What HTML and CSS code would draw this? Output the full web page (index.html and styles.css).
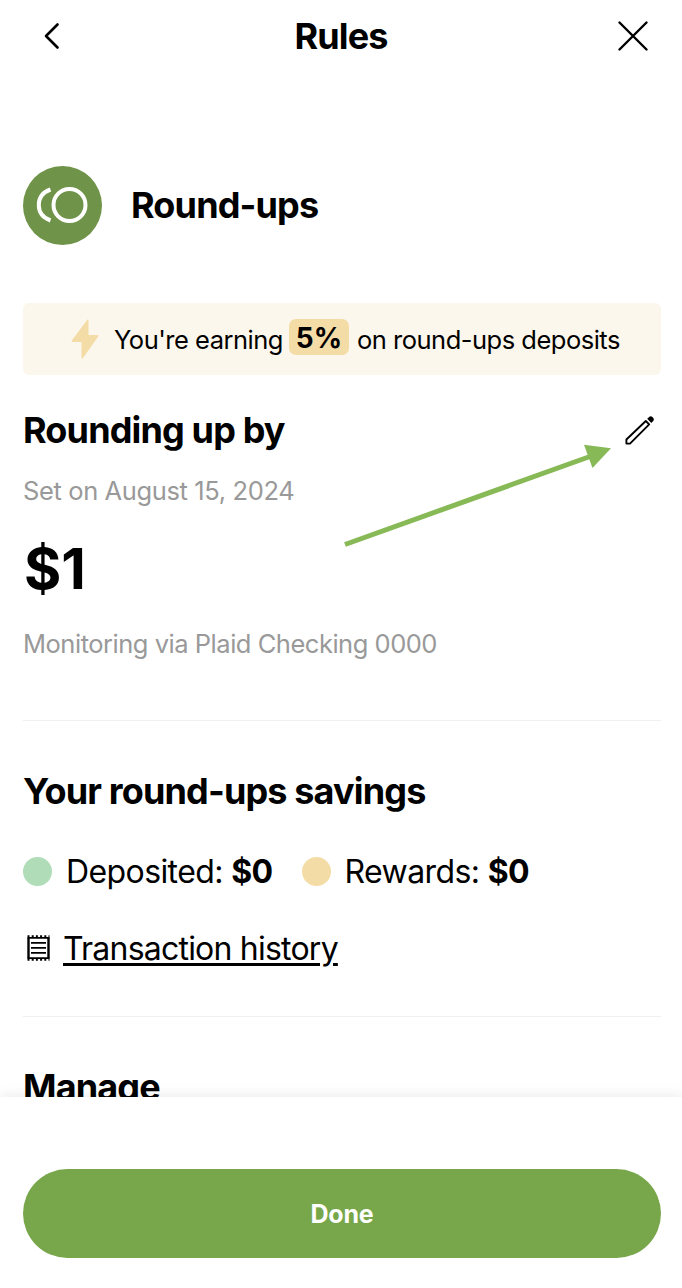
FILE: index.html
```html
<!DOCTYPE html>
<html lang="en">
<head>
  <meta charset="UTF-8">
  <title>Rules</title>
  <link rel="stylesheet" href="styles.css">
</head>
<body>
  <header class="topbar">
    <button class="icon-btn" aria-label="Back">
      <svg width="18" height="28" viewBox="0 0 18 28" fill="none" stroke="#000" stroke-width="2.6" stroke-linecap="round" stroke-linejoin="round">
        <path d="M15.500 2.500L4 14L15.500 25.500"/>
      </svg>
    </button>
    <h1>Rules</h1>
    <button class="icon-btn" aria-label="Close">
      <svg width="30" height="30" viewBox="0 0 30 30" fill="none" stroke="#000" stroke-width="2.4" stroke-linecap="round">
        <path d="M1.5 1.5L28.5 28.5M28.5 1.5L1.5 28.5"/>
      </svg>
    </button>
  </header>

  <main>
    <div class="rule">
      <span class="rule-icon">
        <svg width="79" height="79" viewBox="0 0 79 79" fill="none" stroke="#fff" stroke-width="4">
          <circle cx="46.5" cy="39" r="16"/>
          <path d="M27.5 23.5C19 26.5 15.8 33 15.8 39C15.8 45 19 51.5 27.5 54.5"/>
        </svg>
      </span>
      <h2>Round-ups</h2>
    </div>

    <div class="banner">
      <svg width="28" height="40" viewBox="0 0 28 40" fill="#f4dca6">
        <path d="M16.5 0.5Q17.5 0 17.5 1.5V16H26.5Q28 16.200 27 17.800L12 39Q10.500 40.500 10.500 38.500V23H1.500Q0 22.800 1 21.200Z"/>
      </svg>
      <span class="earning">You're earning</span>
      <b class="percent">5%</b>
      <span class="deposits">on round-ups deposits</span>
    </div>

    <section class="rounding">
      <div class="title-row">
        <h2>Rounding up by</h2>
        <button class="icon-btn edit" aria-label="Edit">
          <svg width="30" height="30" viewBox="0 0 30 30">
            <path d="M1.400 24.500L20.800 6L24.200 9.400L5 28.600H1.400Z" fill="none" stroke="#000" stroke-width="1.900" stroke-linejoin="round"/>
            <path d="M22.200 3.800L24.400 1.700Q26 0.700 27.700 2.300Q29.700 4.100 28.500 5.700L26.300 7.900Z"/>
          </svg>
        </button>
      </div>
      <p class="muted set-on">Set on August 15, 2024</p>
      <p class="amount">$1</p>
      <p class="muted monitoring">Monitoring via Plaid Checking 0000</p>
      <!-- pointer to the edit button -->
      <svg class="arrow" width="270" height="106" viewBox="0 0 270 106">
        <path d="M3 101.500L248 13.500" stroke="#87b956" stroke-width="5"/>
        <path d="M242 1.800L269 5.300L250.500 25Z" fill="#87b956"/>
      </svg>
    </section>

    <section class="savings">
      <h2>Your round-ups savings</h2>
      <div class="totals">
        <span class="dot green"></span>
        <span class="total">Deposited: <b>$0</b></span>
        <span class="dot yellow"></span>
        <span class="total">Rewards: <b>$0</b></span>
      </div>
      <div class="history">
        <svg width="24" height="26" viewBox="0 0 24 26" fill="none" stroke="#000">
          <path d="M2.500 2.500V23.500M22.500 2.500V23.500" stroke-width="2.400"/>
          <path d="M1.500 2.800H23.500M1.500 23.200H23.500" stroke-width="1.800"/>
          <path d="M1.500 1.200H23.500M1.500 24.800H23.500" stroke-width="1.800" stroke-dasharray="2 2.200"/>
          <path d="M5 7.800H20M5 12.800H20M5 17.800H20" stroke-width="1.800"/>
        </svg>
        <a href="#">Transaction history</a>
      </div>
    </section>

    <section class="manage">
      <h2>Manage</h2>
    </section>
  </main>

  <footer>
    <button class="done">Done</button>
  </footer>
</body>
</html>
```

FILE: styles.css
```css
* {
  box-sizing: border-box;
}

body {
  margin: 0;
  height: 1288px;
  display: flex;
  flex-direction: column;
  overflow: hidden;
  font-family: Inter, "Liberation Sans", sans-serif;
  color: #000;
  background: #fff;
}

h1, h2, p {
  margin: 0;
}

h1, h2 {
  font-size: 36px;
  line-height: 44px;
  font-weight: 650;
  letter-spacing: -0.85px;
}

.icon-btn {
  padding: 0;
  border: none;
  background: none;
  display: flex;
}

.topbar {
  flex: none;
  height: 72px;
  padding: 0 34px 0 42px;
  display: grid;
  grid-template-columns: 58px 1fr 66px;
  align-items: center;
  text-align: center;
}

.topbar .icon-btn:last-child {
  justify-self: end;
}

main {
  flex: 1;
  min-height: 0;
  overflow: hidden;
  padding: 94px 21px 0 23px;
}

.rule {
  display: flex;
  align-items: center;
  gap: 29px;
}

.rule h2 {
  margin-bottom: 2px;
}

.rule-icon {
  width: 79px;
  height: 79px;
  border-radius: 50%;
  background: #6f9348;
}

.banner {
  margin-top: 58px;
  height: 72px;
  padding-left: 48px;
  border-radius: 6px;
  background: #fcf7ec;
  display: flex;
  align-items: center;
  font-size: 25.5px;
  letter-spacing: -0.5px;
  white-space: nowrap;
}

.earning {
  width: 167px;
  margin-left: 15px;
}

.percent {
  margin: -4px 8px 0;
  width: 60px;
  height: 36px;
  line-height: 38px;
  border-radius: 7px;
  background: #f4dca6;
  text-align: center;
  font-size: 28px;
  font-weight: 650;
  letter-spacing: 0;
}

.rounding {
  position: relative;
  height: 346px;
  padding-top: 33px;
  border-bottom: 1px solid #f0f0f0;
}

.title-row {
  display: flex;
  justify-content: space-between;
  align-items: center;
}

.edit {
  margin-right: 6px;
}

.muted {
  font-size: 25.5px;
  line-height: 32px;
  letter-spacing: -0.48px;
  color: #999;
}

.set-on {
  margin-top: 23px;
  letter-spacing: -0.38px;
}

.amount {
  margin-top: 28px;
  padding-left: 1px;
  font-size: 57px;
  line-height: 68px;
  font-weight: 700;
}

.monitoring {
  margin-top: 25px;
}

.arrow {
  position: absolute;
  left: 319px;
  top: 68px;
}

.savings {
  height: 296px;
  padding-top: 48px;
  border-bottom: 1px solid #f0f0f0;
}

.totals {
  margin-top: 38px;
  height: 40px;
  display: flex;
  align-items: center;
  font-size: 32px;
}

.dot {
  width: 29px;
  height: 29px;
  margin-right: 14px;
  border-radius: 50%;
}

.total {
  margin-right: 29px;
  letter-spacing: -0.6px;
}

.history {
  margin-top: 37px;
  height: 40px;
  padding-left: 3px;
  display: flex;
  align-items: center;
  gap: 13px;
}

.history a {
  color: #000;
  font-size: 32px;
  letter-spacing: -0.78px;
  text-decoration-thickness: 3px;
  text-underline-offset: 3px;
}

.green {
  background: #b0dcb8;
}

.yellow {
  background: #f4dca6;
}

.manage {
  padding-top: 48px;
}

footer {
  position: relative;
  flex: none;
  height: 191px;
  padding: 72px 21px 0 23px;
  background: #fff;
  box-shadow: 0 0 14px rgba(0, 0, 0, 0.1);
}

.done {
  width: 100%;
  height: 89px;
  border: none;
  border-radius: 45px;
  background: #78a64a;
  color: #fff;
  font-family: inherit;
  font-size: 25px;
  font-weight: 650;
  letter-spacing: -0.2px;
}
```
